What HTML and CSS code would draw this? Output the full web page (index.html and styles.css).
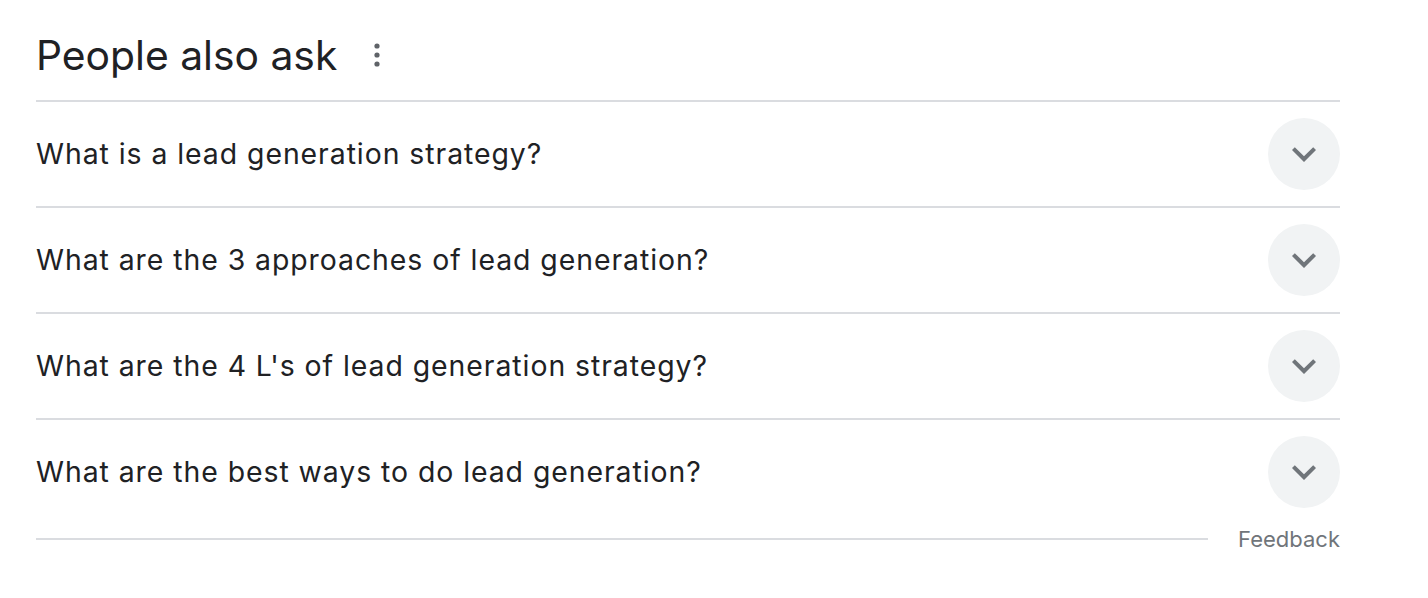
FILE: index.html
```html
<!DOCTYPE html>
<html lang="en">
<head>
<meta charset="utf-8">
<title>People also ask</title>
<link rel="stylesheet" href="styles.css">
</head>
<body>
<div class="paa">
  <div class="paa-head">
    <h2 class="paa-title">People also ask</h2>
    <span class="paa-menu" aria-label="More options">
      <svg width="6" height="24" viewBox="0 0 6 24"><circle cx="3" cy="3" r="2.6"/><circle cx="3" cy="12" r="2.6"/><circle cx="3" cy="21" r="2.6"/></svg>
    </span>
  </div>
  <div class="paa-list">
    <div class="paa-row">
      <span class="paa-q">What is a lead generation strategy?</span>
      <span class="paa-btn"><svg width="48" height="48" viewBox="0 0 24 24"><path d="M16.59 8.59 12 13.17 7.41 8.59 6 10l6 6 6-6z"/></svg></span>
    </div>
    <div class="paa-row">
      <span class="paa-q">What are the 3 approaches of lead generation?</span>
      <span class="paa-btn"><svg width="48" height="48" viewBox="0 0 24 24"><path d="M16.59 8.59 12 13.17 7.41 8.59 6 10l6 6 6-6z"/></svg></span>
    </div>
    <div class="paa-row">
      <span class="paa-q">What are the 4 L's of lead generation strategy?</span>
      <span class="paa-btn"><svg width="48" height="48" viewBox="0 0 24 24"><path d="M16.59 8.59 12 13.17 7.41 8.59 6 10l6 6 6-6z"/></svg></span>
    </div>
    <div class="paa-row">
      <span class="paa-q">What are the best ways to do lead generation?</span>
      <span class="paa-btn"><svg width="48" height="48" viewBox="0 0 24 24"><path d="M16.59 8.59 12 13.17 7.41 8.59 6 10l6 6 6-6z"/></svg></span>
    </div>
  </div>
  <div class="paa-foot">
    <span class="paa-foot-line"></span>
    <span class="paa-feedback">Feedback</span>
  </div>
</div>
</body>
</html>
```
FILE: styles.css
```css
html, body {
  margin: 0;
  padding: 0;
  background: #fff;
}
body {
  font-family: Inter, Roboto, "Liberation Sans", Arial, sans-serif;
  color: #202124;
}
.paa {
  width: 1304px;
  margin-left: 36px;
  padding-top: 28px;
}
.paa-head {
  display: flex;
  align-items: center;
  height: 54px;
  padding-bottom: 18px;
  border-bottom: 2px solid #dadce0;
}
.paa-title {
  margin: 0;
  font-size: 40.8px;
  line-height: 54px;
  font-weight: 400;
  color: #202124;
}
.paa-menu {
  display: flex;
  margin-left: 37px;
  fill: #5f6368;
}
.paa-row {
  display: flex;
  align-items: center;
  justify-content: space-between;
  height: 104px;
  border-bottom: 2px solid #dadce0;
}
.paa-row:last-child {
  border-bottom: none;
}
.paa-q {
  font-size: 28.4px;
  line-height: 40px;
  letter-spacing: 0.95px;
  color: #202124;
}
.paa-btn {
  display: flex;
  align-items: center;
  justify-content: center;
  width: 72px;
  height: 72px;
  border-radius: 50%;
  background: #f1f3f4;
  fill: #70757a;
}
.paa-foot {
  display: flex;
  align-items: center;
  height: 30px;
}
.paa-foot-line {
  flex: 1;
  height: 2px;
  background: #dadce0;
}
.paa-feedback {
  margin-left: 30px;
  font-size: 22px;
  line-height: 30px;
  color: #70757a;
}
```
